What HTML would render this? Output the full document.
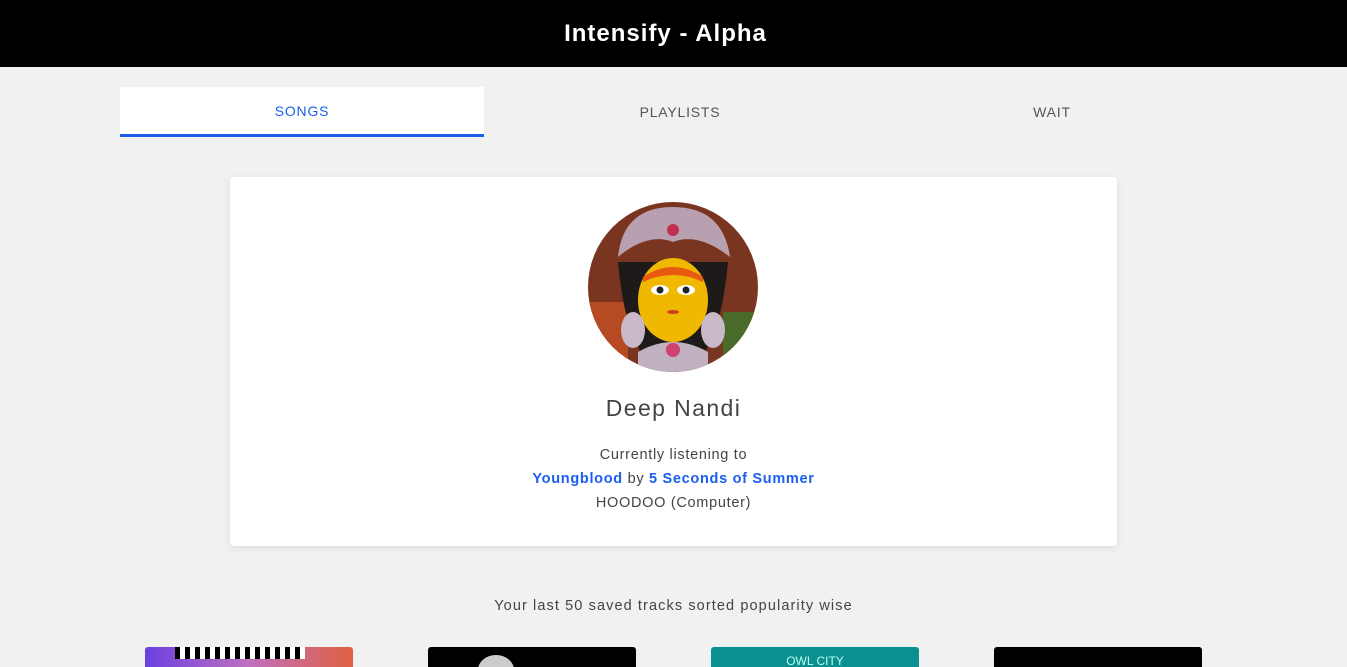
<!DOCTYPE html>
<html><head><meta charset="utf-8">
<style>
*{margin:0;padding:0;box-sizing:border-box}
body{width:1347px;height:663px;overflow:hidden;background:#f1f1f1;font-family:"Liberation Sans",sans-serif;position:relative;color:#444}
.hdr{position:absolute;left:0;top:0;width:1347px;height:67px;background:#000;color:#fff;text-align:center;font-size:24px;font-weight:bold;line-height:68px;letter-spacing:1px;padding-right:16px}
.tab{position:absolute;top:87px;height:50px;line-height:50px;text-align:center;font-size:14px;letter-spacing:0.8px;color:#555}
.tab.on{background:#fff;color:#1a5ef0;border-bottom:3px solid #1a5ef0;line-height:48px}
.card{position:absolute;left:230px;top:177px;width:887px;height:369px;background:#fff;border-radius:4px;box-shadow:0 2px 8px rgba(0,0,0,0.08)}
.av{position:absolute;left:358px;top:25px;width:170px;height:170px;border-radius:50%;overflow:hidden}
.name{position:absolute;left:0;width:887px;top:218px;text-align:center;font-size:23px;color:#444;letter-spacing:1.4px}
.ln{position:absolute;left:0;width:887px;text-align:center;font-size:14.5px;color:#444;letter-spacing:0.7px}
.ln b{color:#1a5ef0}
.sub{position:absolute;left:0;width:1347px;top:598px;text-align:center;font-size:14.5px;color:#444;letter-spacing:1.1px}
.t{position:absolute;top:647px;width:208px;height:20px;border-radius:3px 3px 0 0;overflow:hidden}
</style></head><body>
<div class="hdr">Intensify - Alpha</div>
<div class="tab on" style="left:120px;width:364px">SONGS</div>
<div class="tab" style="left:498px;width:364px">PLAYLISTS</div>
<div class="tab" style="left:870px;width:364px">WAIT</div>
<div class="card">
 <div class="av"><svg width="170" height="170" viewBox="0 0 170 170">
  <rect width="170" height="170" fill="#7a3520"/>
  <rect x="0" y="100" width="40" height="70" fill="#b64a22"/>
  <rect x="135" y="110" width="35" height="60" fill="#4a6a2a"/>
  <path d="M30 60 Q40 170 85 170 Q130 170 140 60 Z" fill="#1e1a1a"/>
  <path d="M30 55 Q35 5 85 5 Q135 5 142 55 Q110 30 85 40 Q60 30 30 55Z" fill="#b8a0b0"/>
  <circle cx="85" cy="28" r="6" fill="#c03050"/>
  <ellipse cx="85" cy="98" rx="35" ry="42" fill="#f0b800"/>
  <path d="M55 75 Q85 55 115 75 L115 80 Q85 66 55 80Z" fill="#e85a10"/>
  <ellipse cx="72" cy="88" rx="9" ry="5" fill="#fff"/><circle cx="72" cy="88" r="3.5" fill="#222"/>
  <ellipse cx="98" cy="88" rx="9" ry="5" fill="#fff"/><circle cx="98" cy="88" r="3.5" fill="#222"/>
  <ellipse cx="85" cy="110" rx="6" ry="2" fill="#d04020"/>
  <ellipse cx="45" cy="128" rx="12" ry="18" fill="#c8b8c8"/>
  <ellipse cx="125" cy="128" rx="12" ry="18" fill="#c8b8c8"/>
  <path d="M50 150 Q85 130 120 150 L120 170 L50 170Z" fill="#c0b0c0"/>
  <circle cx="85" cy="148" r="7" fill="#d04070"/>
 </svg></div>
 <div class="name">Deep Nandi</div>
 <div class="ln" style="top:270px">Currently listening to</div>
 <div class="ln" style="top:294px"><b>Youngblood</b> by <b>5 Seconds of Summer</b></div>
 <div class="ln" style="top:318px">HOODOO (Computer)</div>
</div>
<div class="sub">Your last 50 saved tracks sorted popularity wise</div>
<div class="t" style="left:145px;background:linear-gradient(90deg,#6a40e0,#c070c0,#e06040)"><div style="position:absolute;left:30px;top:0;width:130px;height:12px;background:repeating-linear-gradient(90deg,#000 0 5px,#fff 5px 10px)"></div></div>
<div class="t" style="left:428px;background:#000"><div style="position:absolute;left:50px;top:8px;width:36px;height:30px;border-radius:50%;background:#ccc"></div></div>
<div class="t" style="left:711px;background:#0a9090;color:#bfe;font-size:12px;text-align:center;line-height:28px">OWL CITY</div>
<div class="t" style="left:994px;background:#000"></div>
</body></html>
